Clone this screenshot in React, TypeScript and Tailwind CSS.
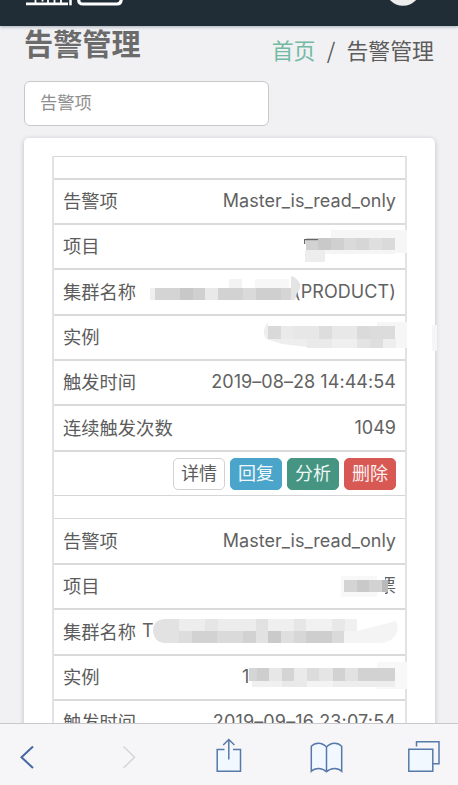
import type { ReactNode } from 'react';

type Cell = [number, number, number, number, string];

const latin = "font-['Inter','Noto_Sans_CJK_SC',sans-serif]";

/* Redaction blocks laid over a value; coordinates are relative to the row. */
function Mosaic({ cells, children }: { cells: Cell[]; children?: ReactNode }) {
  return (
    <svg className="pointer-events-none absolute -left-[2px] top-[-1px] z-10 overflow-visible" width="354" height="45">
      {cells.map(([x, y, w, h, c], i) => (
        <rect key={i} x={x} y={y} width={w} height={h} fill={c} />
      ))}
      {children}
    </svg>
  );
}

function Row({ label, value, size, children }: { label: string; value?: ReactNode; size: string; children?: ReactNode }) {
  return (
    <div className={`relative flex shrink-0 items-center justify-between border-[#dadadc] px-[9px] pb-[1px] ${size}`}>
      <span className="whitespace-nowrap pb-[2px] text-[18.3px] leading-[26px] text-[#5c5c5c]">{label}</span>
      <span className={`whitespace-nowrap text-[18px] leading-[26px] text-[#626262] ${latin}`}>{value}</span>
      {children}
    </div>
  );
}

const projectOne: Cell[] = [
  [279, 6, 76, 23, '#f6f6f6'],
  [253, 26, 20, 12, '#ededed'],
  [273, 26, 70, 4, '#f5f5f5'],
  [254, 14, 12, 12, '#d2d2d2'],
  [266, 14, 13, 12, '#c9c9c9'],
  [279, 14, 13, 12, '#d0d0d0'],
  [292, 14, 12, 12, '#dadada'],
  [304, 14, 13, 12, '#d6d6d6'],
  [317, 14, 13, 12, '#dfdfdf'],
  [330, 14, 13, 12, '#dadada'],
  [252, 15, 14, 1.2, '#666'],
  [252, 15, 1.2, 5, '#666'],
];
const clusterOne: Cell[] = [
  [177, 10, 13, 9, '#f3f3f3'],
  [203, 10, 34, 9, '#f7f7f7'],
  [98, 19, 5, 12, '#efefef'],
  [103, 19, 25, 12, '#d4d4d4'],
  [128, 19, 13, 12, '#c8c8c8'],
  [141, 19, 12, 12, '#d0d0d0'],
  [153, 19, 13, 12, '#e9e9e9'],
  [166, 19, 25, 12, '#d2d2d2'],
  [191, 19, 13, 12, '#dadada'],
  [204, 19, 25, 12, '#cfcfcf'],
  [229, 19, 12, 12, '#d5d5d5'],
];
const instanceOne: Cell[] = [
  [325, 7, 30, 26, '#f6f6f6'],
  [216, 11, 13, 13, '#d9d9d9'],
  [229, 11, 13, 13, '#eaeaea'],
  [242, 11, 25, 13, '#e7e7e7'],
  [267, 11, 13, 13, '#dddddd'],
  [280, 11, 25, 13, '#e8e8e8'],
  [305, 11, 13, 13, '#dadada'],
  [318, 11, 25, 13, '#dcdcdc'],
  [255, 24, 25, 9, '#eaeaea'],
  [280, 24, 25, 9, '#efefef'],
  [305, 24, 13, 9, '#e4e4e4'],
  [318, 24, 13, 9, '#dedede'],
  [331, 24, 13, 9, '#eeeeee'],
];
const projectTwo: Cell[] = [
  [289, 12, 39, 21, '#f8f8f8'],
  [292, 16, 13, 12, '#d4d4d4'],
  [305, 16, 12, 12, '#c9c9c9'],
  [317, 16, 13, 12, '#d2d2d2'],
  [325, 10, 8, 6, '#ffffff'],
  [325, 28, 8, 8, '#ffffff'],
  [330, 16, 6, 12, '#b9b9b9'],
];
const clusterTwo: Cell[] = [
  [127, 10, 26, 12, '#ededed'],
  [153, 10, 13, 12, '#e5e5e5'],
  [166, 10, 38, 12, '#ececec'],
  [204, 10, 12, 12, '#e1e1e1'],
  [216, 10, 26, 12, '#efefef'],
  [242, 10, 12, 12, '#e6e6e6'],
  [254, 10, 26, 12, '#f1f1f1'],
  [280, 10, 13, 12, '#e8e8e8'],
  [293, 10, 12, 12, '#f0f0f0'],
  [127, 22, 13, 12, '#dddddd'],
  [140, 22, 25, 12, '#d2d2d2'],
  [165, 22, 26, 12, '#dadada'],
  [191, 22, 13, 12, '#d2d2d2'],
  [204, 22, 12, 12, '#e2e2e2'],
  [216, 22, 13, 12, '#cacaca'],
  [229, 22, 13, 12, '#dfdfdf'],
  [242, 22, 12, 12, '#d7d7d7'],
  [254, 22, 26, 12, '#cecece'],
  [280, 22, 12, 12, '#dadada'],
];
const instanceTwo: Cell[] = [
  [325, 7, 30, 27, '#f8f8f8'],
  [197, 13, 8, 13, '#d5d5d5'],
  [205, 13, 12, 13, '#cecece'],
  [217, 13, 13, 13, '#e7e7e7'],
  [230, 13, 12, 13, '#d4d4d4'],
  [242, 13, 13, 13, '#eaeaea'],
  [255, 13, 12, 13, '#dcdcdc'],
  [267, 13, 14, 13, '#e5e5e5'],
  [281, 13, 12, 13, '#d2d2d2'],
  [293, 13, 13, 13, '#e2e2e2'],
  [306, 13, 37, 13, '#d2d2d2'],
  [200, 26, 30, 6, '#f0f0f0'],
  [230, 26, 25, 6, '#e9e9e9'],
  [255, 26, 26, 6, '#f3f3f3'],
  [281, 26, 62, 6, '#ededed'],
];

function Action({ text, tone }: { text: string; tone: string }) {
  return (
    <button className={`flex h-8 w-[52px] items-center justify-center rounded-[5px] border pb-[3px] text-[18px] leading-none ${tone}`}>
      {text}
    </button>
  );
}

export default function App() {
  return (
    <div className="flex h-[785px] w-[458px] flex-col overflow-hidden bg-[#f1f1f4] font-['Noto_Sans_CJK_SC',sans-serif]">
      <header className="z-20 h-[26px] shrink-0 bg-[#202d36] shadow-[0_1px_3px_#a5adb5]">
        <svg width="458" height="26" fill="none">
          <g stroke="#fff">
            <path d="M26 3.8H68" strokeWidth="2.8" />
            <path d="M35.5 0V3M42.5 0V1.5M48 0V3M54.5 0V3M61 0V3" strokeWidth="1.8" />
            <path d="M70.5 0V5.3" strokeWidth="2.5" />
            <path d="M78.8 0V1Q79 4 83 4H117Q121 4 121.2 0" strokeWidth="3.2" />
          </g>
          <circle cx="403" cy="-12" r="17.8" fill="#ededee" />
        </svg>
      </header>

      <main className="flex h-[697px] shrink-0 flex-col overflow-hidden px-6">
        <div className="flex h-[55px] shrink-0 justify-between">
          <h1 className="whitespace-nowrap text-[29.2px] font-bold leading-[32px] text-[#6b6b6b]">告警管理</h1>
          <nav className="flex whitespace-nowrap pt-[10px] text-[21.9px] leading-[28px] text-[#5c5c5c]">
            <span className="text-[#73baa4]">首页</span>
            <span className="w-[31px] text-center">/</span>
            <span>告警管理</span>
          </nav>
        </div>
        <input
          className="h-[45px] w-[245px] shrink-0 rounded-[6px] border border-[#c8c8cb] bg-white px-[15px] pb-[5px] text-[17.3px] placeholder:text-[#8f8f8f] focus:outline-none"
          placeholder="告警项"
        />
        <section className="mt-3 flex h-[600px] w-[411px] shrink-0 flex-col rounded-t-[5px] bg-white px-7 pt-[18px] shadow-[0_1px_5px_#bbbcc0]">
          <div className="flex w-[355px] flex-col border-x-2 border-x-[#e2e2e4]">
            <div className="h-[22px] shrink-0 border-t border-[#d6d6d8]" />
            <Row label="告警项" size="h-[45px] border-t-2" value={<span className="tracking-[0.02px]">Master_is_read_only</span>} />
            <Row label="项目" size="h-[45px] border-t-2">
              <Mosaic cells={projectOne} />
            </Row>
            <Row label="集群名称" size="h-[46px] border-t-2" value={<span className="tracking-[0.1px]">(PRODUCT)</span>}>
              <Mosaic cells={clusterOne}>
                <path d="M239 7Q246 9 248 16Q249 20 245 24L243 31H239V7Z" fill="#e4e4e4" />
              </Mosaic>
            </Row>
            <Row label="实例" size="h-[45px] border-t-2">
              <Mosaic cells={instanceOne}>
                <path d="M216 7Q209 16 214 24L230 29L255 32V24H216Z" fill="#eeeeee" />
                <rect x="380" y="10" width="5" height="26" fill="#f6f6f7" />
              </Mosaic>
            </Row>
            <Row label="触发时间" size="h-[45px] border-t-2" value={<span className="tracking-[0.06px]">2019–08–28 14:44:54</span>} />
            <Row label="连续触发次数" size="h-[46px] border-t-2" value="1049" />
            <div className="flex h-[45px] shrink-0 items-center justify-end gap-[5px] border-t-2 border-[#dadadc] pr-[9px]">
              <Action text="详情" tone="bg-white border-[#d2d2d5] text-[#5c5c5c]" />
              <Action text="回复" tone="bg-[#4ba5cb] border-[#4ba5cb] text-[#f0f8fb]" />
              <Action text="分析" tone="bg-[#459582] border-[#459582] text-[#eff8f5]" />
              <Action text="删除" tone="bg-[#d85854] border-[#d85854] text-[#fcf1f0]" />
            </div>
            <div className="h-[23px] shrink-0 border-t border-[#d6d6d8]" />
            <Row label="告警项" size="h-[45px] border-t" value={<span className="tracking-[0.02px]">Master_is_read_only</span>} />
            <Row label="项目" size="h-[45px] border-t-2" value="票">
              <Mosaic cells={projectTwo} />
            </Row>
            <Row label="集群名称" size="h-[46px] border-t-2">
              <span className={`absolute left-[88px] top-[8px] text-[18px] leading-[26px] text-[#626262] ${latin}`}>T</span>
              <Mosaic cells={clusterTwo}>
                <path d="M127 10H112Q101 11 101 22Q102 33 112 34H127Z" fill="#e2e2e2" />
                <path d="M292 34V22H305L344 12Q348 18 343 27Q337 34 328 34Z" fill="#f4f4f4" />
              </Mosaic>
            </Row>
            <Row label="实例" size="h-[45px] border-t-2">
              <span className={`absolute left-[188px] top-[8px] text-[18px] leading-[26px] text-[#626262] ${latin}`}>1</span>
              <Mosaic cells={instanceTwo} />
            </Row>
            <Row label="触发时间" size="h-[45px] border-t-2" value={<span className="tracking-[0.14px]">2019–09–16 23:07:54</span>} />
          </div>
        </section>
      </main>

      <footer className="z-20 h-[62px] shrink-0 border-t border-[#c9c9cc] bg-[#f6f6f8]">
        <svg width="458" height="61" viewBox="0 724 458 61" fill="none" stroke="#5779a9" strokeWidth="1.5">
          <path d="M33 746.5L21.5 757.3L33 768" stroke="#4668a0" strokeWidth="2" />
          <path d="M123.5 746.5L134.5 757.3L123.5 768" stroke="#d6d6d9" strokeWidth="1.6" />
          <path d="M224.5 749.5H217.2V771.3H240.5V749.5H233" fill="#f1f8ff" />
          <path d="M228.8 759.5V739.8M223.2 745L228.8 739.5L234.4 745" />
          <path d="M326.5 747Q323 743.2 318.5 743.2Q314 743.2 311.3 746.3V771.3Q314 768.5 318.5 768.5Q323 768.5 326.5 771.8Q330 768.5 334.5 768.5Q339 768.5 341.7 771.3V746.3Q339 743.2 334.5 743.2Q330 743.2 326.5 747ZM326.5 747V771.8" fill="#f1f8ff" />
          <path d="M408.8 749.2H432.8V771.3H408.8Z" fill="#f1f8ff" />
          <path d="M416.5 746.5V741.7H439V763.8H433" />
        </svg>
      </footer>
    </div>
  );
}
